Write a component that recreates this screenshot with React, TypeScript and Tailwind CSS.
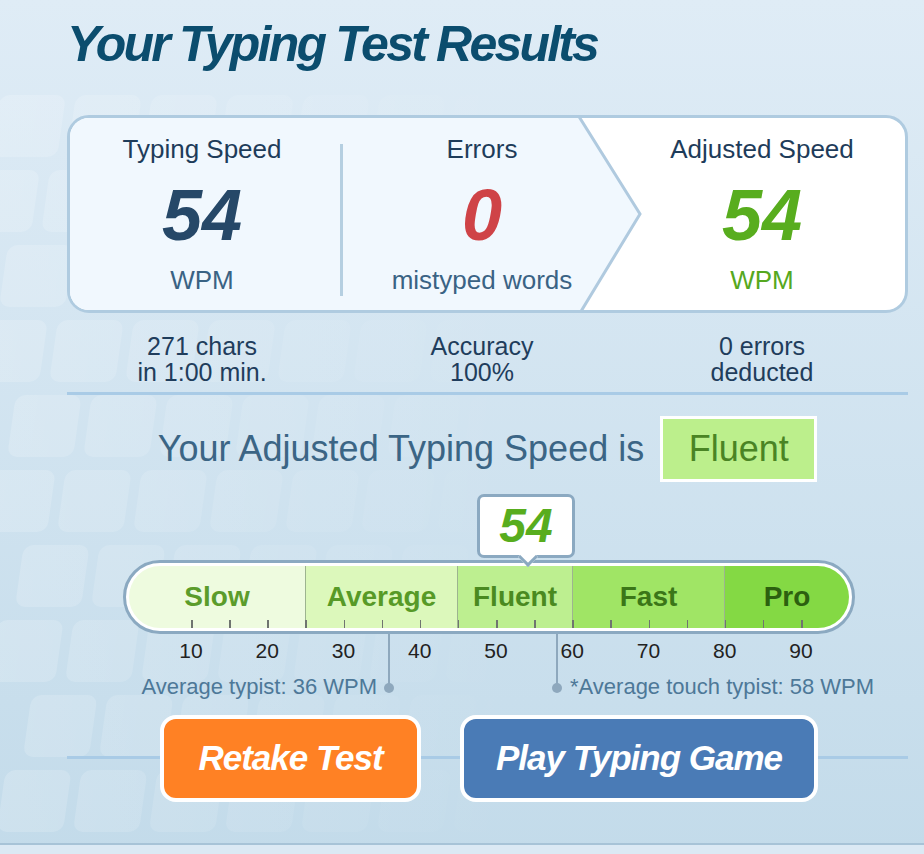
import React from 'react';

const SANS = "font-['Liberation_Sans',Arial,sans-serif]";

// x position on the scale, relative to the content column (left = 67px on the page)
const scaleX = (v: number) => 124 + (v - 10) * 7.625;

const segments = [
  { label: 'Slow', w: 176, bg: 'bg-[#eefbdf]', fg: 'text-[#5b9c2b]' },
  { label: 'Average', w: 152, bg: 'bg-[#dcf8bb]', fg: 'text-[#579a27]' },
  { label: 'Fluent', w: 115, bg: 'bg-[#bdef90]', fg: 'text-[#4a8a20]' },
  { label: 'Fast', w: 152, bg: 'bg-[#a0e565]', fg: 'text-[#3b7618]' },
  { label: 'Pro', w: 125, bg: 'bg-[#84d944]', fg: 'text-[#2c600f]' },
];

const ticks = Array.from({ length: 17 }, (_, i) => 10 + i * 5);
const numbers = [10, 20, 30, 40, 50, 60, 70, 80, 90];

function KeysBackdrop() {
  const keys: React.ReactNode[] = [];
  for (let r = 0; r < 10; r++) {
    for (let c = 0; c < 7; c++) {
      const x = c * 76 - (r % 2) * 30 + r * 4;
      const y = 95 + r * 75;
      keys.push(
        <rect
          key={`${r}-${c}`}
          x={x}
          y={y}
          width={66}
          height={62}
          rx={10}
          transform={`skewX(-8) translate(${y * 0.14} 0)`}
          fill="url(#fade)"
        />
      );
    }
  }
  return (
    <svg className="absolute inset-0" width="924" height="854" aria-hidden>
      <defs>
        <linearGradient id="fade" x1="0" y1="0" x2="520" y2="0" gradientUnits="userSpaceOnUse">
          <stop offset="0" stopColor="#ffffff" stopOpacity="0.18" />
          <stop offset="1" stopColor="#ffffff" stopOpacity="0" />
        </linearGradient>
      </defs>
      {keys}
    </svg>
  );
}

function StatColumn({
  title,
  value,
  unit,
  valueColor,
  unitColor,
}: {
  title: string;
  value: string;
  unit: string;
  valueColor: string;
  unitColor: string;
}) {
  return (
    <div className="flex flex-col items-center pt-[16px]">
      <div className="text-[26px] leading-[30px] text-[#1e3c5a]">{title}</div>
      <div className={`mt-[15px] text-[72px] leading-[72px] font-bold italic ${valueColor}`}>{value}</div>
      <div className={`mt-[14px] text-[26px] leading-[30px] ${unitColor}`}>{unit}</div>
    </div>
  );
}

function ResultCard() {
  return (
    <div className="relative mt-[42px] h-[198px] w-[841px] overflow-hidden rounded-[22px] border-[3px] border-[#afcbe0] bg-white">
      <svg
        className="absolute inset-0 h-full w-full"
        viewBox="0 0 835 192"
        preserveAspectRatio="none"
        aria-hidden
      >
        <polygon points="0,0 509,0 570,96 511,192 0,192" fill="#f1f8fe" />
        <polyline points="508,-3 570,96 510,195" fill="none" stroke="#b0cadf" strokeWidth="3" />
      </svg>
      <div className="relative flex h-full">
        <div className="w-[270px] pr-[6px]">
          <StatColumn title="Typing Speed" value="54" unit="WPM" valueColor="text-[#264868]" unitColor="text-[#3a6384]" />
        </div>
        <div className="mt-[26px] h-[152px] w-[3px] bg-[#b5cfe1]" />
        <div className="w-[278px]">
          <StatColumn title="Errors" value="0" unit="mistyped words" valueColor="text-[#cf4347]" unitColor="text-[#3a6384]" />
        </div>
        <div className="w-[282px]">
          <StatColumn title="Adjusted Speed" value="54" unit="WPM" valueColor="text-[#58ad1e]" unitColor="text-[#56a820]" />
        </div>
      </div>
    </div>
  );
}

function SpeedScale() {
  return (
    <div className="relative mt-[12px] h-[206px] w-full pt-[66px]">
      {/* current value bubble */}
      <div className="absolute left-[410px] top-0 z-10 flex h-[64px] w-[98px] items-center justify-center rounded-[7px] border-[3px] border-[#8ba9c1] bg-white">
        <span className="text-[48px] leading-none font-bold italic text-[#58ad1e]">54</span>
        <div className="absolute bottom-[-9px] left-[41px] h-[14px] w-[14px] rotate-45 border-b-[3px] border-r-[3px] border-[#8ba9c1] bg-white" />
      </div>

      <div className="ml-[56px] h-[74px] w-[732px] rounded-full border-[3px] border-[#8ba9c1] bg-white p-[3px]">
        <div className="relative flex h-full overflow-hidden rounded-full">
          {segments.map((s, i) => (
            <div
              key={s.label}
              style={{ width: s.w }}
              className={`flex h-full items-center justify-center ${s.bg} ${i > 0 ? 'border-l border-[#9db48f]' : ''}`}
            >
              <span className={`text-[28px] font-bold ${s.fg}`}>{s.label}</span>
            </div>
          ))}
          {ticks.map((t) => (
            <div
              key={t}
              className="absolute bottom-0 h-[8px] w-[1.5px] bg-[#6f7470]"
              style={{ left: scaleX(t) - 62 }}
            />
          ))}
        </div>
      </div>

      <div className="relative mt-[5px] h-[24px]">
        {numbers.map((n) => (
          <span
            key={n}
            className="absolute top-0 -translate-x-1/2 text-[21px] leading-[24px] text-[#222]"
            style={{ left: scaleX(n) }}
          >
            {n}
          </span>
        ))}
      </div>

      {/* average markers */}
      <div className="absolute left-[321px] top-[140px] h-[54px] w-[2px] bg-[#8ea8bd]" />
      <div className="absolute left-[317px] top-[189px] h-[10px] w-[10px] rounded-full bg-[#8ea8bd]" />
      <span className="absolute right-[531px] top-[181px] whitespace-nowrap text-[22px] leading-[24px] text-[#4d7898]">
        Average typist: 36 WPM
      </span>

      <div className="absolute left-[489px] top-[140px] h-[54px] w-[2px] bg-[#8ea8bd]" />
      <div className="absolute left-[485px] top-[189px] h-[10px] w-[10px] rounded-full bg-[#8ea8bd]" />
      <span className="absolute left-[503px] top-[181px] whitespace-nowrap text-[22px] leading-[24px] text-[#4d7898]">
        *Average touch typist: 58 WPM
      </span>
    </div>
  );
}

export default function App() {
  return (
    <div className={`relative h-[854px] w-[924px] overflow-hidden bg-gradient-to-b from-[#dfecf6] to-[#c3dbea] ${SANS}`}>
      <KeysBackdrop />
      <div className="relative h-[843px] w-[924px] pl-[67px] pr-[16px]">
        <h1 className="pt-[16px] text-[50px] leading-[57px] font-bold italic tracking-[-2.8px] text-[#0b4d6e]">
          Your Typing Test Results
        </h1>

        <ResultCard />

        <div className="mt-[20px] flex text-[25px] leading-[26px] text-[#1f3d5c]">
          <div className="w-[270px] text-center">271 chars<br />in 1:00 min.</div>
          <div className="w-[290px] text-center">Accuracy<br />100%</div>
          <div className="w-[270px] text-center">0 errors<br />deducted</div>
        </div>

        <div className="mt-[7px] h-[3px] w-[841px] bg-[#a9cbe6]" />

        <div className="mt-[21px] flex w-[841px] items-center justify-center gap-[16px]">
          <span className="text-[36px] text-[#3b6585]">Your Adjusted Typing Speed is</span>
          <div className="flex h-[66px] w-[157px] items-center justify-center border-[3px] border-white bg-[#bcef8c] text-[36px] text-[#4a8424]">
            Fluent
          </div>
        </div>

        <SpeedScale />

        <div className="relative mt-[15px] w-[841px]">
          <div className="absolute left-0 right-0 top-[41px] h-[3px] bg-[#a9cbe6]" />
          <div className="relative flex justify-center gap-[39px] pl-[3px]">
            <button className="flex h-[87px] w-[261px] items-center justify-center rounded-[16px] border-[4px] border-white bg-[#ff8124] text-[35px] font-bold italic tracking-[-1px] text-white">
              Retake Test
            </button>
            <button className="flex h-[87px] w-[358px] items-center justify-center rounded-[16px] border-[4px] border-white bg-[#4a7bb6] text-[35px] font-bold italic tracking-[-1px] text-white">
              Play Typing Game
            </button>
          </div>
        </div>
      </div>
      <div className="relative h-[2px] bg-[#a7c3d7]" />
      <div className="relative h-[9px] bg-[#dbe9f4]" />
    </div>
  );
}
